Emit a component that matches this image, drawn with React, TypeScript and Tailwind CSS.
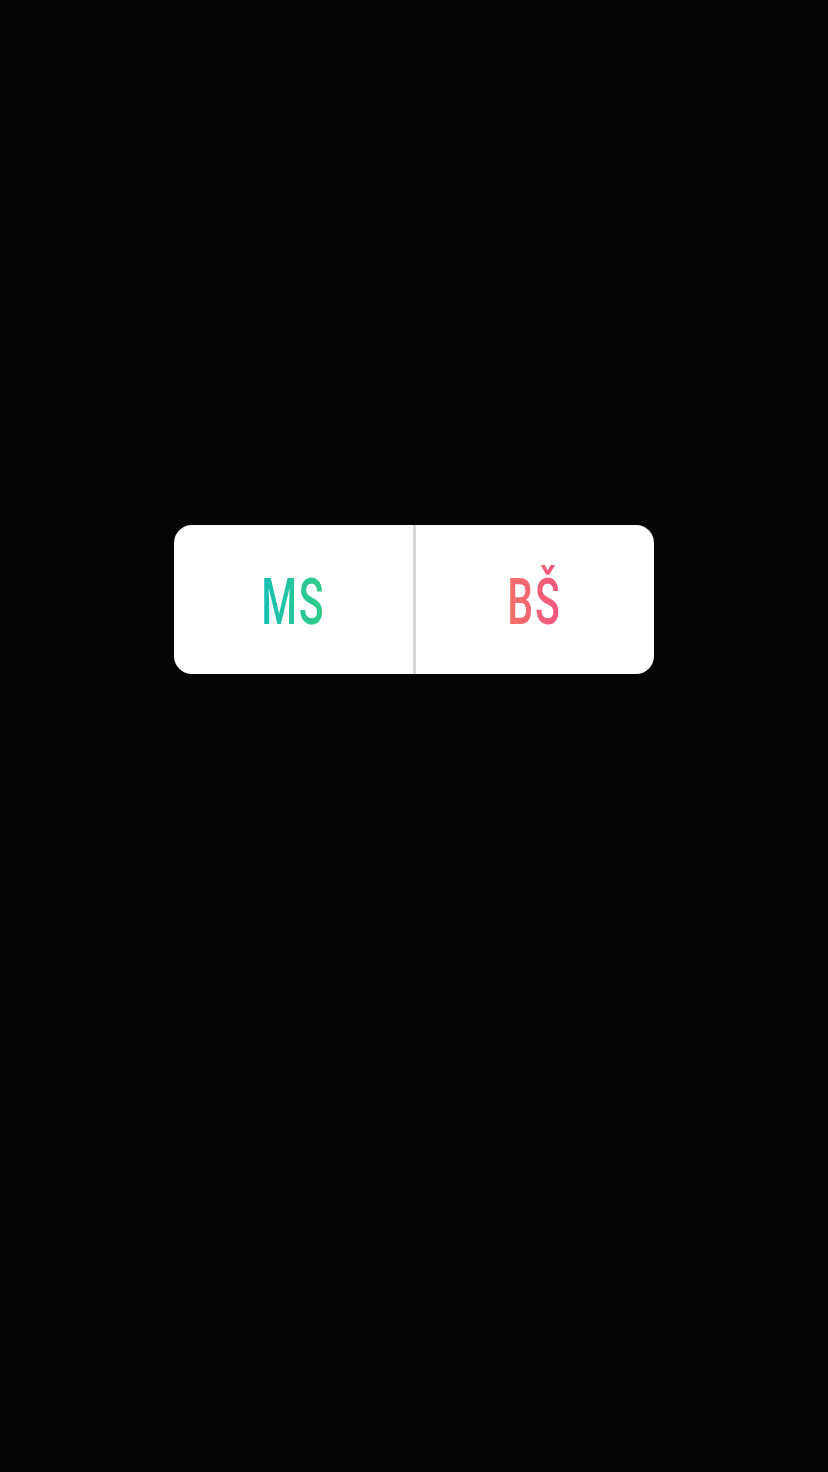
function PollOption({ label, gradient }: { label: string; gradient: string }) {
  return (
    <div className="flex-1 flex items-center justify-center pt-[6px]">
      <span
        className={`bg-gradient-to-r ${gradient} bg-clip-text text-transparent text-[64px] leading-[1.4] font-medium tracking-[3px] scale-x-[0.64] inline-block`}
        style={{ fontFamily: "Roboto, sans-serif" }}
      >
        {label}
      </span>
    </div>
  );
}

export default function App() {
  return (
    <div className="w-[828px] h-[1472px] bg-[#040405] flex justify-center pt-[525px] overflow-hidden">
      <div className="w-[480px] h-[149px] bg-white rounded-[18px] flex overflow-hidden">
        <PollOption label="MS" gradient="from-[#15bfb4] to-[#33cc84]" />
        <div className="w-[3px] h-full bg-[#d6d6d6]" />
        <PollOption label="BŠ" gradient="from-[#f4706a] to-[#ef547e]" />
      </div>
    </div>
  );
}
